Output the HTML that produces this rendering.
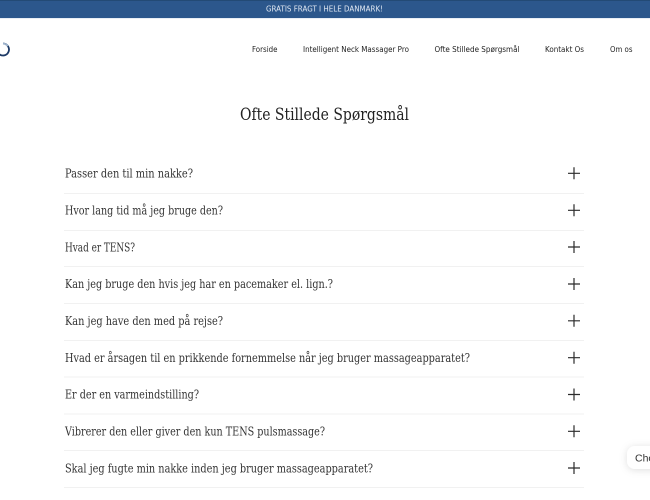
<!DOCTYPE html>
<html lang="da">
<head>
<meta charset="utf-8">
<title>Ofte Stillede Spørgsmål</title>
<style>
html,body{margin:0;padding:0;background:#fff;width:650px;height:500px;overflow:hidden}
svg{display:block;filter:blur(.3px)}
.q{font-family:"DejaVu Serif",serif;font-size:12px;fill:#333}
.n{font-family:"DejaVu Sans",sans-serif;font-size:8.3px;fill:#222}
.l{stroke:#f1f1f1;stroke-width:1}
.p{stroke:#2b2b2b;stroke-width:1.2}
</style>
</head>
<body>
<svg width="650" height="500" viewBox="0 0 650 500" xmlns="http://www.w3.org/2000/svg">
<defs>
<filter id="sh" x="-50%" y="-50%" width="200%" height="200%"><feDropShadow dx="0" dy="1" stdDeviation="4" flood-color="#000" flood-opacity=".13"/></filter>
</defs>
<rect width="650" height="500" fill="#fff"/>
<rect width="650" height="18" fill="#2c578c"/>
<rect width="650" height="1" fill="#234a75"/>
<rect y="18" width="650" height="1" fill="#e9eef6"/>
<text x="266" y="11.5" font-family="DejaVu Sans, sans-serif" font-size="7.5" fill="#dfe7f2" textLength="117" lengthAdjust="spacingAndGlyphs">GRATIS FRAGT I HELE DANMARK!</text>

<path d="M3 43.5 A6 6 0 1 1 -1.5 53.5" fill="none" stroke="#1d3a66" stroke-width="1.8"/>
<path d="M3 43.5 A6 6 0 0 1 7.8 46" fill="none" stroke="#9db3cc" stroke-width="1.8"/>

<text class="n" x="252" y="52" textLength="25.5" lengthAdjust="spacingAndGlyphs">Forside</text>
<text class="n" x="303" y="52" textLength="106" lengthAdjust="spacingAndGlyphs">Intelligent Neck Massager Pro</text>
<text class="n" x="434.5" y="52" textLength="85" lengthAdjust="spacingAndGlyphs">Ofte Stillede Spørgsmål</text>
<text class="n" x="545" y="52" textLength="39" lengthAdjust="spacingAndGlyphs">Kontakt Os</text>
<text class="n" x="610" y="52" textLength="22.5" lengthAdjust="spacingAndGlyphs">Om os</text>

<text x="240" y="120" font-family="DejaVu Serif, serif" font-size="17px" fill="#222" textLength="169" lengthAdjust="spacingAndGlyphs">Ofte Stillede Spørgsmål</text>

<text class="q" x="65" y="177.5" textLength="128" lengthAdjust="spacingAndGlyphs">Passer den til min nakke?</text>
<text class="q" x="65" y="214.5" textLength="158" lengthAdjust="spacingAndGlyphs">Hvor lang tid må jeg bruge den?</text>
<text class="q" x="65" y="251.3" textLength="70" lengthAdjust="spacingAndGlyphs">Hvad er TENS?</text>
<text class="q" x="65" y="288.2" textLength="268" lengthAdjust="spacingAndGlyphs">Kan jeg bruge den hvis jeg har en pacemaker el. lign.?</text>
<text class="q" x="65" y="325" textLength="158" lengthAdjust="spacingAndGlyphs">Kan jeg have den med på rejse?</text>
<text class="q" x="65" y="362" textLength="405" lengthAdjust="spacingAndGlyphs">Hvad er årsagen til en prikkende fornemmelse når jeg bruger massageapparatet?</text>
<text class="q" x="65" y="398.7" textLength="134" lengthAdjust="spacingAndGlyphs">Er der en varmeindstilling?</text>
<text class="q" x="65" y="435.5" textLength="260" lengthAdjust="spacingAndGlyphs">Vibrerer den eller giver den kun TENS pulsmassage?</text>
<text class="q" x="65" y="472.4" textLength="308" lengthAdjust="spacingAndGlyphs">Skal jeg fugte min nakke inden jeg bruger massageapparatet?</text>

<g>
<line class="l" x1="64" x2="584" y1="193.5" y2="193.5"/>
<line class="l" x1="64" x2="584" y1="230.5" y2="230.5"/>
<line class="l" x1="64" x2="584" y1="266.5" y2="266.5"/>
<line class="l" x1="64" x2="584" y1="303.5" y2="303.5"/>
<line class="l" x1="64" x2="584" y1="340.5" y2="340.5"/>
<line class="l" x1="64" x2="584" y1="377" y2="377"/>
<line class="l" x1="64" x2="584" y1="414" y2="414"/>
<line class="l" x1="64" x2="584" y1="450.5" y2="450.5"/>
<line class="l" x1="64" x2="584" y1="487.5" y2="487.5"/>
</g>

<g fill="none">
<path class="p" d="M568 173.3h12M574 167.3v12"/>
<path class="p" d="M568 210.3h12M574 204.3v12"/>
<path class="p" d="M568 247h12M574 241v12"/>
<path class="p" d="M568 284h12M574 278v12"/>
<path class="p" d="M568 320.8h12M574 314.8v12"/>
<path class="p" d="M568 357.7h12M574 351.7v12"/>
<path class="p" d="M568 394.5h12M574 388.5v12"/>
<path class="p" d="M568 431.3h12M574 425.3v12"/>
<path class="p" d="M568 468h12M574 462v12"/>
</g>

<rect x="627" y="446" width="50" height="23" rx="8" fill="#fff" filter="url(#sh)"/>
<text x="635" y="461.5" font-family="Liberation Sans, sans-serif" font-size="10.5" fill="#333">Cho</text>
</svg>
</body>
</html>
